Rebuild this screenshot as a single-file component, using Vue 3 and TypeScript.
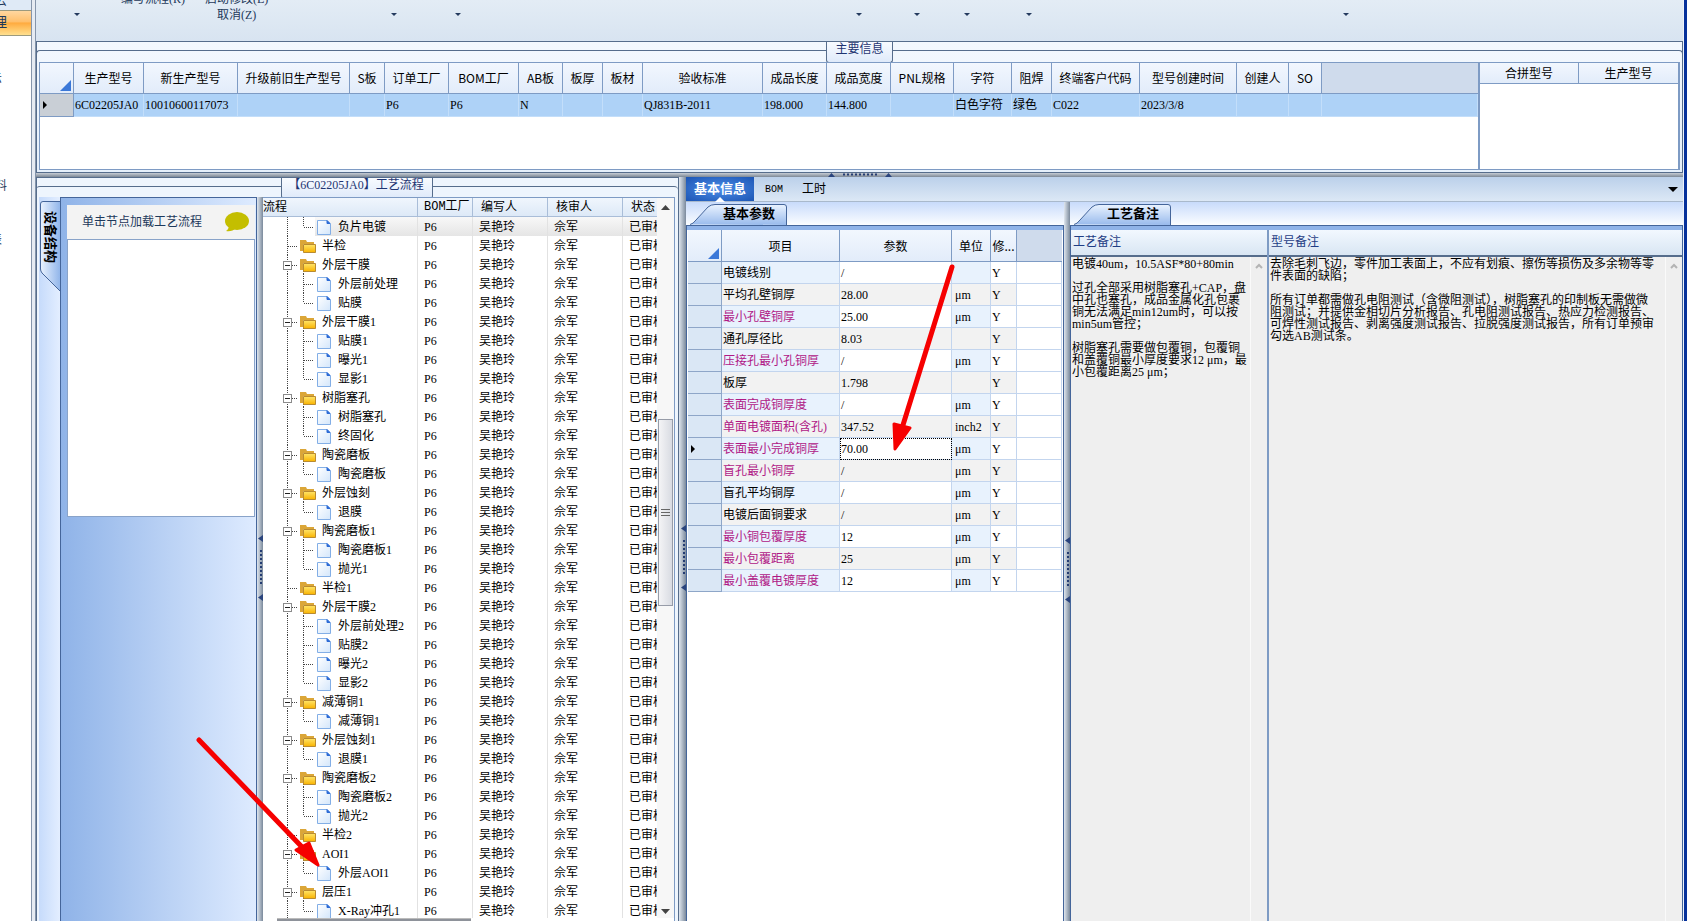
<script setup lang="ts">
interface Column { title: string; width: number; value: string }
interface TreeNode { name: string; kind: 'folder' | 'leaf'; open: boolean; last: boolean }
interface Param { name: string; value: string; unit: string; key: boolean }

const mainColumns: Column[] = [
  { title: '生产型号', width: 70, value: '6C02205JA0' },
  { title: '新生产型号', width: 94, value: '10010600117073' },
  { title: '升级前旧生产型号', width: 112, value: '' },
  { title: 'S板', width: 35, value: '' },
  { title: '订单工厂', width: 64, value: 'P6' },
  { title: 'BOM工厂', width: 70, value: 'P6' },
  { title: 'AB板', width: 44, value: 'N' },
  { title: '板厚', width: 40, value: '' },
  { title: '板材', width: 40, value: '' },
  { title: '验收标准', width: 120, value: 'QJ831B-2011' },
  { title: '成品长度', width: 64, value: '198.000' },
  { title: '成品宽度', width: 64, value: '144.800' },
  { title: 'PNL规格', width: 63, value: '' },
  { title: '字符', width: 58, value: '白色字符' },
  { title: '阻焊', width: 40, value: '绿色' },
  { title: '终端客户代码', width: 88, value: 'C022' },
  { title: '型号创建时间', width: 97, value: '2023/3/8' },
  { title: '创建人', width: 52, value: '' },
  { title: 'SO', width: 33, value: '' },
]

const groups: [string, string[]][] = [
  ['', ['负片电镀']],
  ['半检', []],
  ['外层干膜', ['外层前处理', '贴膜']],
  ['外层干膜1', ['贴膜1', '曝光1', '显影1']],
  ['树脂塞孔', ['树脂塞孔', '终固化']],
  ['陶瓷磨板', ['陶瓷磨板']],
  ['外层蚀刻', ['退膜']],
  ['陶瓷磨板1', ['陶瓷磨板1', '抛光1']],
  ['半检1', []],
  ['外层干膜2', ['外层前处理2', '贴膜2', '曝光2', '显影2']],
  ['减薄铜1', ['减薄铜1']],
  ['外层蚀刻1', ['退膜1']],
  ['陶瓷磨板2', ['陶瓷磨板2', '抛光2']],
  ['半检2', []],
  ['AOI1', ['外层AOI1']],
  ['层压1', ['X-Ray冲孔1']],
]

const nodes: TreeNode[] = groups.flatMap(([name, kids]) => {
  const list: TreeNode[] = name ? [{ name, kind: 'folder', open: kids.length > 0, last: false }] : []
  kids.forEach((k, i) => list.push({ name: k, kind: 'leaf', open: false, last: i === kids.length - 1 }))
  return list
})

const params: Param[] = [
  { name: '电镀线别', value: '/', unit: '', key: false },
  { name: '平均孔壁铜厚', value: '28.00', unit: 'μm', key: false },
  { name: '最小孔壁铜厚', value: '25.00', unit: 'μm', key: true },
  { name: '通孔厚径比', value: '8.03', unit: '', key: false },
  { name: '压接孔最小孔铜厚', value: '/', unit: 'μm', key: true },
  { name: '板厚', value: '1.798', unit: '', key: false },
  { name: '表面完成铜厚度', value: '/', unit: 'μm', key: true },
  { name: '单面电镀面积(含孔)', value: '347.52', unit: 'inch2', key: true },
  { name: '表面最小完成铜厚', value: '70.00', unit: 'μm', key: true },
  { name: '盲孔最小铜厚', value: '/', unit: 'μm', key: true },
  { name: '盲孔平均铜厚', value: '/', unit: 'μm', key: false },
  { name: '电镀后面铜要求', value: '/', unit: 'μm', key: false },
  { name: '最小铜包覆厚度', value: '12', unit: 'μm', key: true },
  { name: '最小包覆距离', value: '25', unit: 'μm', key: true },
  { name: '最小盖覆电镀厚度', value: '12', unit: 'μm', key: true },
]
const current = 8

const craftNote = [
  '电镀40um，10.5ASF*80+80min', '',
  '过孔全部采用树脂塞孔+CAP，盘', '中孔也塞孔，成品金属化孔包裹', '铜无法满足min12um时，可以按', 'min5um管控；', '',
  '树脂塞孔需要做包覆铜，包覆铜', '和盖覆铜最小厚度要求12 μm，最', '小包覆距离25 μm；',
].join('\n')
const modelNote = [
  '去除毛刺飞边，零件加工表面上，不应有划痕、擦伤等损伤及多余物等零', '件表面的缺陷；', '',
  '所有订单都需做孔电阻测试（含微阻测试），树脂塞孔的印制板无需做微', '阻测试；并提供金相切片分析报告、孔电阻测试报告、热应力检测报告、',
  '可焊性测试报告、剥离强度测试报告、拉脱强度测试报告，所有订单预审', '勾选AB测试条。',
].join('\n')

const dropGroups = [1, 3, 4, 6, 7, 8, 9, 11]
</script>

<template>
  <div class="app">
    <nav class="nav">
      <a href="#" class="nav-item n1"><span>云</span></a>
      <a href="#" class="nav-item n2"><span>管理</span></a>
      <a href="#" class="nav-item n3"><span>示</span></a>
      <a href="#" class="nav-item n4"><span>料</span></a>
      <a href="#" class="nav-item n5"><span>表</span></a>
    </nav>
    <div class="nav-edge"></div>

    <main class="work">
      <header class="ribbon">
        <button v-for="g in dropGroups" :key="g" class="drop" :class="'g' + g" aria-label="展开">
          <svg width="6" height="3" viewBox="0 0 6 3"><path d="M0 0H6L3 3Z" fill="#243a5e" /></svg>
        </button>
        <div class="cmds">
          <button class="cmd">编写流程(R)</button>
          <div class="cmd-col">
            <button class="cmd">启动修改(E)</button>
            <button class="cmd cancel">取消(Z)</button>
          </div>
        </div>
      </header>

      <section class="main-info">
        <div class="caption top-caption"><span>主要信息</span></div>
        <div class="main-grids">
          <div class="main-left">
            <table class="grid head-grid">
              <colgroup>
                <col class="w-mark">
                <col v-for="c in mainColumns" :key="c.title" :style="{ width: c.width + 'px' }">
                <col>
              </colgroup>
              <thead>
                <tr>
                  <th class="corner"><svg width="11" height="11" viewBox="0 0 11 11"><path d="M11 0V11H0Z" fill="#3b78d8" /></svg></th>
                  <th v-for="c in mainColumns" :key="c.title">{{ c.title }}</th>
                  <th class="rest"></th>
                </tr>
              </thead>
              <tbody>
                <tr>
                  <td class="mark"><svg width="4" height="8" viewBox="0 0 4 8"><path d="M0 0L4 4L0 8Z" /></svg></td>
                  <td v-for="c in mainColumns" :key="c.title">{{ c.value }}</td>
                  <td></td>
                </tr>
              </tbody>
            </table>
          </div>
          <div class="main-right">
            <table class="grid merge-grid">
              <thead><tr><th>合拼型号</th><th>生产型号</th></tr></thead>
            </table>
          </div>
        </div>
      </section>

      <div class="split-h">
        <svg width="64" height="4" viewBox="0 0 64 4">
          <path d="M0 4H7L3.5 0ZM57 4H64L60.500 0Z" fill="#2a447d" />
          <path d="M15 1.500H49" stroke="#243c72" stroke-width="2" stroke-dasharray="2 2" />
        </svg>
      </div>

      <div class="lower">
        <section class="flow">
          <div class="caption flow-caption"><span>【6C02205JA0】工艺流程</span></div>
          <div class="flow-body">
            <div class="side-tabs">
              <button class="side-tab">
                <svg width="20" height="90" viewBox="0 0 20 90">
                  <defs><linearGradient id="sg"><stop offset="0" stop-color="#eaf3ff" /><stop offset="1" stop-color="#92b6ea" /></linearGradient></defs>
                  <path d="M20 .5H3Q.5 .5 .5 3V68Q.5 70 2 72L20 90" fill="url(#sg)" stroke="#44659a" />
                </svg>
                <span>设备结构</span>
              </button>
            </div>
            <div class="device">
              <div class="device-head">
                <span>单击节点加载工艺流程</span>
                <svg width="24" height="20" viewBox="0 0 24 20"><ellipse cx="12" cy="9" rx="12" ry="9" fill="#c4be00" /><path d="M4 13Q4 17 1 19Q7 20 11 16Z" fill="#c4be00" /></svg>
              </div>
              <div class="device-list"></div>
            </div>
            <div class="split-v">
              <svg width="5" height="66" viewBox="0 0 5 66"><path d="M5 0V7L0 3.500ZM5 59V66L0 62.500Z" fill="#2a447d" /><path d="M3 15V50" stroke="#243c72" stroke-width="2" stroke-dasharray="2 2" /></svg>
            </div>
            <div class="tree-wrap">
              <div class="tree-clip">
                <table class="tree">
                  <colgroup><col class="t1"><col class="t2"><col class="t3"><col class="t3"><col></colgroup>
                  <thead><tr><th>流程</th><th class="mono">BOM工厂</th><th>编写人</th><th>核审人</th><th>状态</th></tr></thead>
                  <tbody>
                    <tr v-for="(n, i) in nodes" :key="i" :class="{ picked: i === 0 }">
                      <td>
                        <div class="node">
                          <svg v-if="n.kind === 'folder'" width="54" height="19" viewBox="0 0 54 19">
                            <defs><linearGradient id="fg" x2="0" y2="1"><stop offset="0" stop-color="#ffe56a" /><stop offset="1" stop-color="#f9b300" /></linearGradient></defs>
                            <path d="M24.500 0V19" class="dots" />
                            <path d="M25 10.500H35" class="dots" />
                            <path v-if="n.open" d="M40.500 16V19" class="dots" />
                            <g v-if="n.open"><rect x="20.500" y="6.500" width="8" height="8" fill="#fff" stroke="#8b8b8b" /><path d="M22 10.500H27" stroke="#222" /></g>
                            <path d="M37 4H43L44 6H51V8H40V15H37Z" fill="#dba638" />
                            <path d="M40.500 8.500H52.500V16.500H40.500Z" fill="url(#fg)" stroke="#b98b31" />
                          </svg>
                          <svg v-else width="70" height="19" viewBox="0 0 70 19">
                            <defs><linearGradient id="pg" x2="1" y2="1"><stop offset="0" stop-color="#fff" /><stop offset="1" stop-color="#d3e6fb" /></linearGradient></defs>
                            <path d="M24.500 0V19" class="dots" />
                            <path :d="n.last ? 'M40.5 0V10' : 'M40.5 0V19'" class="dots" />
                            <path d="M41 10.500H50" class="dots" />
                            <path d="M54.500 3.500H64L67.500 7V17.500H54.500Z" fill="url(#pg)" stroke="#82aee6" />
                            <path d="M64 3.500V6.500H67Z" fill="#2c6bd6" stroke="#2c6bd6" />
                          </svg>
                          <span>{{ n.name }}</span>
                        </div>
                      </td>
                      <td>P6</td><td>吴艳玲</td><td>佘军</td><td>已审核</td>
                    </tr>
                  </tbody>
                </table>
              </div>
              <div class="scroll">
                <svg width="9" height="5" viewBox="0 0 9 5"><path d="M0 5H9L4.500 0Z" fill="#444" /></svg>
                <div class="thumb"><i></i><i></i><i></i></div>
                <svg width="9" height="5" viewBox="0 0 9 5"><path d="M0 0H9L4.500 5Z" fill="#444" /></svg>
              </div>
              <div class="hbar"></div>
            </div>
          </div>
        </section>

        <div class="split-v outer">
          <svg width="5" height="66" viewBox="0 0 5 66"><path d="M5 0V7L0 3.500ZM5 59V66L0 62.500Z" fill="#2a447d" /><path d="M3 15V50" stroke="#243c72" stroke-width="2" stroke-dasharray="2 2" /></svg>
        </div>

        <section class="detail">
          <div class="tabs">
            <button class="tab on">基本信息<svg width="10" height="5" viewBox="0 0 10 5"><path d="M0 5L5 0L10 5Z" fill="#fff" /></svg></button>
            <button class="tab bom">BOM</button>
            <button class="tab">工时</button>
            <button class="tab more" aria-label="更多"><svg width="10" height="5" viewBox="0 0 10 5"><path d="M0 0H10L5 5Z" /></svg></button>
          </div>
          <div class="panes">
            <div class="pane params-pane">
              <div class="pane-tabs">
                <button class="slant">
                  <svg width="98" height="21" viewBox="0 0 98 21">
                    <defs><linearGradient id="tg" x2="0" y2="1"><stop offset="0" stop-color="#eaf3ff" /><stop offset="1" stop-color="#98baec" /></linearGradient></defs>
                    <path d="M0 20.500Q3 20 6 16L18 3Q21 .5 25 .5H94Q96.500 .5 96.500 3V21" fill="url(#tg)" stroke="#44659a" />
                  </svg>
                  <span>基本参数</span>
                </button>
              </div>
              <div class="pane-body">
                <table class="grid params">
                  <colgroup><col class="p0"><col class="p1"><col class="p2"><col class="p3"><col class="p4"><col></colgroup>
                  <thead>
                    <tr>
                      <th class="corner"><svg width="11" height="11" viewBox="0 0 11 11"><path d="M11 0V11H0Z" fill="#3b78d8" /></svg></th>
                      <th>项目</th><th>参数</th><th>单位</th><th>修...</th><th class="rest"></th>
                    </tr>
                  </thead>
                  <tbody>
                    <tr v-for="(p, i) in params" :key="p.name">
                      <td class="mark"><svg v-if="i === current" width="4" height="8" viewBox="0 0 4 8"><path d="M0 0L4 4L0 8Z" /></svg></td>
                      <td class="tint" :class="{ key: p.key }">{{ p.name }}</td>
                      <td :class="{ focus: i === current }">{{ p.value }}</td>
                      <td class="tint unit">{{ p.unit }}</td>
                      <td>Y</td>
                      <td class="blank"></td>
                    </tr>
                  </tbody>
                </table>
              </div>
            </div>
            <div class="split-v">
              <svg width="5" height="66" viewBox="0 0 5 66"><path d="M5 0V7L0 3.500ZM5 59V66L0 62.500Z" fill="#2a447d" /><path d="M3 15V50" stroke="#243c72" stroke-width="2" stroke-dasharray="2 2" /></svg>
            </div>
            <div class="pane notes-pane">
              <div class="pane-tabs">
                <button class="slant">
                  <svg width="98" height="21" viewBox="0 0 98 21"><path d="M0 20.500Q3 20 6 16L18 3Q21 .5 25 .5H94Q96.500 .5 96.500 3V21" fill="url(#tg)" stroke="#44659a" /></svg>
                  <span>工艺备注</span>
                </button>
              </div>
              <div class="pane-body notes">
                <div class="note craft">
                  <label for="craft">工艺备注</label>
                  <div class="note-row">
                    <textarea id="craft" readonly :value="craftNote"></textarea>
                    <div class="note-scroll"><svg width="8" height="6" viewBox="0 0 8 6"><path d="M1 5L4 2L7 5" fill="none" stroke="#b4b4b4" stroke-width="2" /></svg></div>
                  </div>
                </div>
                <div class="note model">
                  <label for="model">型号备注</label>
                  <div class="note-row">
                    <textarea id="model" readonly :value="modelNote"></textarea>
                    <div class="note-scroll"><svg width="8" height="6" viewBox="0 0 8 6"><path d="M1 5L4 2L7 5" fill="none" stroke="#b4b4b4" stroke-width="2" /></svg></div>
                  </div>
                </div>
              </div>
            </div>
          </div>
        </section>
      </div>
    </main>
    <div class="desk"></div>

    <svg class="arrows" width="960" height="880" viewBox="0 0 960 880">
      <g fill="#f60000" stroke="#f60000" stroke-linecap="round" stroke-linejoin="round">
        <path d="M199 740L302 847M952 267L903 425" fill="none" stroke-width="5" />
        <path d="M296 850L309 843L318 865ZM894 424L910 428L895 449Z" stroke-width="3" />
      </g>
    </svg>
  </div>
</template>

<style>
body { margin: 0; overflow: hidden; }
</style>

<style scoped>
* { box-sizing: border-box; }
.app { position: relative; display: flex; height: 100vh; overflow: hidden; background: #fff; color: #000; font: 12px/16px "Liberation Serif", "Noto Sans CJK SC", serif; }
button { font: inherit; color: inherit; border: 0; padding: 0; background: none; white-space: nowrap; }
svg { display: block; flex: none; }
table { border-collapse: separate; border-spacing: 0; table-layout: fixed; width: 100%; }
th, td { padding: 0; font-weight: 400; text-align: left; white-space: nowrap; overflow: hidden; }

.nav { width: 31px; flex: none; display: flex; flex-direction: column; background: #fff; }
.nav-item { display: flex; height: 16px; color: #1e395b; text-decoration: none; white-space: nowrap; overflow: hidden; }
.nav-item span { display: flex; justify-content: flex-end; width: 7px; flex: none; }
.n1 { height: 10px; align-items: flex-end; background: #dfeaf6; line-height: 18px; }
.n2 { height: 26px; align-items: center; border: solid #9c9a7e; border-width: 1px 0; font-size: 14px; background: linear-gradient(#ffd7a0, #ffbf6b 45%, #ffab3f 50%, #ffe08f); }
.n3 { margin-top: 35px; }
.n3 span, .n5 span { width: 2px; }
.n4 { margin-top: 91px; }
.n5 { margin-top: 38px; }
.nav-edge { width: 5px; flex: none; border: solid #8595ab; border-width: 0 1px; background: #e6ebf2; }

.work { flex: 1; min-width: 0; display: flex; flex-direction: column; }
.desk { width: 4px; flex: none; background: #06319b; border-left: 1px solid #eef3fa; }

.ribbon { display: grid; grid-template-columns: 81px 247px 60px 68px 339px 56px 60px 40px 84px 233px 84px 1fr; height: 41px; flex: none; overflow: hidden; background: linear-gradient(#e3ecf5, #d8e4f1); color: #1e395b; }
.drop { grid-row: 1; display: flex; justify-content: center; padding-top: 13px; }
.g1 { grid-column: 1; } .g3 { grid-column: 3; } .g4 { grid-column: 4; } .g6 { grid-column: 6; }
.g7 { grid-column: 7; } .g8 { grid-column: 8; } .g9 { grid-column: 9; } .g11 { grid-column: 11; }
.cmds { grid-column: 2; grid-row: 1; display: flex; align-items: flex-start; gap: 20px; padding-left: 4px; }
.cmds > .cmd, .cmd-col { margin-top: -9px; }
.cmd { height: 16px; }
.cmd-col { display: flex; flex-direction: column; align-items: center; }

.main-info { height: 132px; flex: none; display: flex; flex-direction: column; border: 1px solid #566d8c; background: linear-gradient(#f3f8fe, #e6f0fb); padding: 0 2px 2px; }
.caption { display: grid; grid-template-columns: 1fr auto 1fr; height: 20px; flex: none; color: #1f3572; line-height: 14px; }
.caption::before, .caption::after { content: ""; height: 12px; margin-top: 8px; border-top: 1px solid #566d8c; }
.caption::before { border-left: 1px solid #566d8c; border-radius: 4px 0 0; margin-left: -3px; }
.caption::after { border-right: 1px solid #566d8c; border-radius: 0 4px 0 0; margin-right: -3px; }
.caption span { padding: 0 8px; border: 1px solid #566d8c; border-top: 0; border-radius: 0 0 3px 3px; background: linear-gradient(#f8fbff, #dfeafa); }
.main-grids { flex: 1; display: flex; border: 1px solid #7e9bc4; background: #fff; }
.main-left { flex: 1; min-width: 0; border-right: 2px solid #7e9bc4; }
.main-right { width: 199px; flex: none; border-right: 1px solid #7e9bc4; }

.grid th { text-align: center; font-family: "Noto Sans CJK SC", sans-serif; background: linear-gradient(#f2f7fe, #e2ecfa); border: solid #7e9bc4; border-width: 0 1px 1px 0; }
.grid th.rest { background: #cfdbec; border-right: 0; }
.grid th.corner { vertical-align: bottom; padding: 0 2px 2px 0; }
.corner svg { margin-left: auto; }
.w-mark { width: 34px; }
.head-grid th { height: 31px; }
.head-grid td { height: 23px; padding-left: 1px; background: #aed2f7; border: solid #c3defa; border-width: 0 1px 1px 0; }
.grid td.mark { padding-left: 3px; background: #c9cfd6; border: solid #7e9bc4; border-width: 0 1px 1px 0; }
.merge-grid th { height: 21px; }
.merge-grid th:last-child { border-right: 0; }

.split-h { height: 4px; flex: none; display: flex; justify-content: center; background: linear-gradient(#c6ccd4, #7c8896); }
.split-v { width: 6px; flex: none; display: flex; align-items: center; justify-content: flex-end; padding-top: 17px; background: linear-gradient(90deg, #dfe6ee, #7b8a9c); }
.split-v.outer { width: 7px; }

.lower { flex: 1; min-height: 0; display: flex; }
.flow { width: 643px; flex: none; display: flex; flex-direction: column; border: solid #566d8c; border-width: 1px 1px 0; background: #eef5fd; padding: 0 3px 0 2px; }
.flow-caption { height: 19px; }
.flow-caption::before { border-left: 0; }
.flow-caption::after { border-right: 0; }
.flow-caption span { padding: 0 8px 0 6px; }
.flow-body { flex: 1; min-height: 0; display: flex; }
.side-tabs { width: 21px; flex: none; padding: 4px 0 0 1px; background: linear-gradient(90deg, #c6dbfb, #e3eeff); }
.side-tab { display: grid; }
.side-tab svg, .side-tab span { grid-area: 1 / 1; }
.side-tab span { writing-mode: vertical-rl; text-orientation: sideways; font-size: 13px; font-weight: 700; line-height: 20px; padding-top: 10px; text-align: left; }
.device { width: 197px; flex: none; padding: 7px 1px 0 6px; border: solid #44659a; border-width: 1px 1px 0; background: linear-gradient(90deg, #8fb3e8, #deebff); }
.device-head { height: 34px; display: flex; align-items: center; justify-content: space-between; padding: 0 6px 0 15px; background: #f3f3f3; color: #1e395b; }
.device-list { height: 278px; background: #fff; border: 1px solid #89a3c9; }

.tree-wrap { flex: 1; min-width: 0; display: grid; grid-template-columns: 1fr 17px; grid-template-rows: minmax(0, 1fr) 3px; border: solid #7e9bc4; border-width: 1px 1px 0 0; background: #fff; }
.tree-clip { overflow: hidden; }
.t1 { width: 155px; } .t2 { width: 55px; } .t3 { width: 75px; }
.tree th { height: 19px; padding-left: 8px; background: linear-gradient(#f0f6fd, #dde9f7); border: solid #a9bdd8; border-width: 0 1px 1px 0; }
.tree th:first-child { padding-left: 0; }
.tree th.mono { padding-left: 6px; font-family: "Liberation Mono", "Noto Sans CJK SC", monospace; }
.tree th:last-child, .tree td:last-child { border-right: 0; }
.tree td { height: 19px; padding-left: 6px; border-right: 1px solid #e2e2e2; }
.tree td:first-child { padding-left: 0; }
.tree .picked td { background: linear-gradient(#f8f8f8, #e5e5e5); }
.tree .picked td:first-child { background: linear-gradient(90deg, #fff 52px, transparent 52px), linear-gradient(#f8f8f8, #e5e5e5); }
.node { display: flex; height: 19px; align-items: center; gap: 5px; }
.dots { stroke: #444; stroke-dasharray: 1 1; fill: none; }
.scroll { display: grid; grid-template-rows: 221px 187px 1fr; justify-items: center; background: #f7f7f7; }
.scroll > svg:first-child { margin-top: 7px; }
.scroll > svg:last-child { align-self: end; margin-bottom: 4px; }
.thumb { width: 15px; display: flex; flex-direction: column; align-items: center; justify-content: center; gap: 2px; border: 1px solid #979ca8; background: linear-gradient(90deg, #f4f4f6, #d8dbe2); }
.thumb i { width: 9px; height: 1px; background: #666; }
.hbar { grid-column: 1 / 3; margin: 0 203px 0 14px; border-top: 1px solid #bbb; background: #8e929a; }

.detail { flex: 1; min-width: 0; display: flex; flex-direction: column; }
.tabs { display: flex; height: 25px; flex: none; background: linear-gradient(#bbd0ea, #dce8f6); border-bottom: 1px solid #a9b9cc; }
.tab { padding: 0 8px; line-height: 23px; }
.tab.on { width: 68px; padding: 0; display: grid; grid-template-rows: 20px 5px; justify-items: center; color: #fff; font-size: 13px; font-weight: 700; background: radial-gradient(#4b8de8, #1c55b4); }
.tab.on svg { align-self: end; }
.tab.bom { width: 40px; font: 10px/23px "Liberation Mono", monospace; }
.tab.more { margin-left: auto; padding: 0 5px; }
.panes { flex: 1; min-height: 0; display: flex; }
.pane { display: flex; flex-direction: column; }
.params-pane { width: 378px; flex: none; }
.notes-pane { flex: 1; min-width: 0; }
.pane-tabs { height: 23px; flex: none; padding: 2px 0 0 4px; background: linear-gradient(#c8dbfb, #fbfdff); }
.slant { display: grid; }
.slant svg, .slant span { grid-area: 1 / 1; }
.slant span { padding: 0 0 0 33px; font-size: 13px; font-weight: 700; line-height: 20px; text-align: left; }
.pane-body { flex: 1; min-height: 0; padding: 4px 1px 0; border: solid #44659a; border-width: 1px 1px 0; background: linear-gradient(#8fb3e8 4px, #fff 4px); }

.p0 { width: 34px; } .p1 { width: 118px; } .p2 { width: 112px; } .p3 { width: 39px; } .p4 { width: 26px; }
.params th { height: 32px; }
.params td { height: 22px; padding-left: 1px; border: solid #c3d5ee; border-width: 0 1px 1px 0; }
.params td.mark { background: #dae7f5; border-color: #8ea6c8; }
.params td.tint { background: #e8f2fd; }
.params tr:nth-child(even) td:not(.mark):not(.blank) { background: #f2f2f2; }
.params td.key { color: #b01886; }
.params td.unit { padding-left: 3px; }
.params td.focus { outline: 1px dotted #000; outline-offset: -1px; }

.notes { display: flex; padding: 4px 0 0; }
.note { display: flex; flex-direction: column; min-width: 0; }
.craft { width: 198px; flex: none; border-right: 2px solid #7e9bc4; }
.model { flex: 1; }
.note label { height: 27px; flex: none; padding-left: 2px; line-height: 25px; color: #1f3d85; background: linear-gradient(#f2f8ff, #d9e6f3); border-bottom: 2px solid #566d8c; }
.note-row { flex: 1; display: flex; background: #efefef; }
textarea { flex: 1; min-width: 0; border: 0; margin: 0; padding: 1px 0 0 1px; resize: none; outline: 0; overflow: hidden; white-space: pre; background: #efefef; color: #000; font: 12px/12px "Liberation Serif", "Noto Sans CJK SC", serif; }
.note-scroll { width: 17px; flex: none; padding: 6px 0 0 4px; border-left: 1px solid #fafafa; }
.arrows { position: absolute; top: 0; left: 0; pointer-events: none; }
</style>
